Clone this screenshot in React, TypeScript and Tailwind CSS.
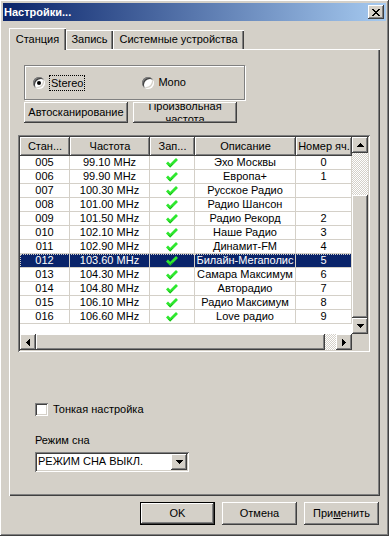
import React from "react";

// classic 3D border helpers
const raised =
  "bg-[#d4d0c8] shadow-[inset_-1px_-1px_0_#404040,inset_1px_1px_0_#ffffff,inset_-2px_-2px_0_#808080,inset_2px_2px_0_#d4d0c8]";
const sunken =
  "shadow-[inset_1px_1px_0_#808080,inset_-1px_-1px_0_#ffffff,inset_2px_2px_0_#404040,inset_-2px_-2px_0_#d4d0c8]";
const checker =
  "[background:repeating-conic-gradient(#ffffff_0_25%,#d4d0c8_0_50%)_0_0/2px_2px]";

interface Station {
  num: string;
  freq: string;
  name: string;
  cell: string;
}

const stations: Station[] = [
  { num: "005", freq: "99.10 MHz", name: "Эхо Москвы", cell: "0" },
  { num: "006", freq: "99.90 MHz", name: "Европа+", cell: "1" },
  { num: "007", freq: "100.30 MHz", name: "Русское Радио", cell: "" },
  { num: "008", freq: "101.00 MHz", name: "Радио Шансон", cell: "" },
  { num: "009", freq: "101.50 MHz", name: "Радио Рекорд", cell: "2" },
  { num: "010", freq: "102.10 MHz", name: "Наше Радио", cell: "3" },
  { num: "011", freq: "102.90 MHz", name: "Динамит-FM", cell: "4" },
  { num: "012", freq: "103.60 MHz", name: "Билайн-Мегаполис", cell: "5" },
  { num: "013", freq: "104.30 MHz", name: "Самара Максимум", cell: "6" },
  { num: "014", freq: "104.80 MHz", name: "Авторадио", cell: "7" },
  { num: "015", freq: "106.10 MHz", name: "Радио Максимум", cell: "8" },
  { num: "016", freq: "106.60 MHz", name: "Love радио", cell: "9" },
];

// little black triangle used on scroll buttons and the combo box
const Arrow = ({ dir }: { dir: "up" | "down" | "left" | "right" }) => {
  const pts = {
    up: "3.5,0 7,4 0,4",
    down: "0,0 7,0 3.5,4",
    left: "4,0 4,7 0,3.5",
    right: "0,0 4,3.5 0,7",
  }[dir];
  const vertical = dir === "up" || dir === "down";
  return (
    <svg width={vertical ? 7 : 4} height={vertical ? 4 : 7}>
      <polygon points={pts} fill="#000" shapeRendering="crispEdges" />
    </svg>
  );
};

const Check = () => (
  <svg width="12" height="10" viewBox="0 0 12 10">
    <path d="M1 4.5 L4.2 7.8 L11 1" stroke="#2ee82e" strokeWidth="2.8" fill="none" />
    <path d="M2.5 7 L4.2 8.8 L6.5 6.4" stroke="#14b014" strokeWidth="1" fill="none" />
  </svg>
);

const ScrollBtn = ({ dir }: { dir: "up" | "down" | "left" | "right" }) => (
  <div className={`w-[16px] h-[16px] shrink-0 flex items-center justify-center ${raised}`}>
    <Arrow dir={dir} />
  </div>
);

const cols = ["w-[50px]", "w-[80px]", "w-[45px]", "w-[101px]", "w-[56px]"];

const App = () => {
  return (
    <div
      className={`w-[389px] h-[536px] p-[3px] flex flex-col text-[11px] text-black font-['Liberation_Sans',Arial,sans-serif] ${raised}`}
    >
      {/* TITLE BAR */}
      <div className="h-[18px] flex items-center justify-between bg-[linear-gradient(to_right,#0a246a,#a6caf0)] pl-[1px] pr-[2px]">
        <span className="text-white font-bold text-[11px]">Настройки...</span>
        <div className={`w-[16px] h-[14px] flex items-center justify-center ${raised}`}>
          <svg width="8" height="7" viewBox="0 0 8 7">
            <path d="M0 0 L7 7 M1 0 L8 7 M7 0 L0 7 M8 0 L1 7" stroke="#000" strokeWidth="1" />
          </svg>
        </div>
      </div>

      <div className="px-[6px] pt-[7px] flex flex-col">
        {/* TABS */}
        <div className="flex items-end h-[21px]">
          <div className="relative z-10 h-[22px] mb-[-1px] w-[57px] flex items-center justify-center bg-[#d4d0c8] shadow-[inset_1px_1px_0_#ffffff,inset_-1px_0_0_#404040,inset_-2px_0_0_#808080]">
            Станция
          </div>
          <div className="h-[19px] w-[47px] flex items-center justify-center shadow-[inset_1px_1px_0_#ffffff,inset_-1px_0_0_#404040,inset_-2px_0_0_#808080]">
            Запись
          </div>
          <div className="h-[19px] w-[131px] flex items-center justify-center shadow-[inset_1px_1px_0_#ffffff,inset_-1px_0_0_#404040,inset_-2px_0_0_#808080]">
            Системные устройства
          </div>
        </div>

        {/* TAB PANEL */}
        <div className="w-[371px] h-[447px] flex flex-col shadow-[inset_1px_1px_0_#ffffff,inset_-1px_-1px_0_#404040,inset_-2px_-2px_0_#808080]">
          {/* stereo / mono group */}
          <div className="ml-[15px] mt-[16px] w-[221px] h-[35px] flex items-center pl-[8px] border border-[#808080] shadow-[1px_1px_0_#ffffff,inset_1px_1px_0_#ffffff]">
            <div className="flex items-center gap-[4px]">
              <div className="w-[12px] h-[12px] rounded-full bg-white flex items-center justify-center shadow-[inset_1px_1px_0_#808080,inset_-1px_-1px_0_#ffffff,inset_2px_2px_0_#404040,inset_-2px_-2px_0_#d4d0c8]">
                <div className="w-[4px] h-[4px] rounded-full bg-black" />
              </div>
              <span className="px-[1px] leading-[14px] border border-dotted border-black">Stereo</span>
            </div>
            <div className="flex items-center gap-[4px] ml-[57px]">
              <div className="w-[12px] h-[12px] rounded-full bg-white shadow-[inset_1px_1px_0_#808080,inset_-1px_-1px_0_#ffffff,inset_2px_2px_0_#404040,inset_-2px_-2px_0_#d4d0c8]" />
              <span>Mono</span>
            </div>
          </div>

          {/* scan buttons */}
          <div className="ml-[15px] mt-[2px] flex gap-[5px]">
            <div className={`w-[104px] h-[21px] flex items-center justify-center ${raised}`}>
              Автосканирование
            </div>
            <div className={`w-[104px] h-[21px] p-[2px] ${raised}`}>
              <div className="h-full overflow-hidden flex flex-col items-center justify-center leading-[13px]">
                <span>Произвольная</span>
                <span>частота</span>
              </div>
            </div>
          </div>

          {/* station list */}
          <div className={`ml-[9px] mt-[12px] w-[352px] h-[217px] p-[2px] bg-white flex flex-col ${sunken}`}>
            <div className="flex flex-1 min-h-0">
              <div className="flex-1 flex flex-col overflow-hidden">
                <div className="flex h-[19px] shrink-0">
                  {["Стан...", "Частота", "Зап...", "Описание", "Номер яч."].map((h, i) => (
                    <div key={h} className={`${cols[i]} h-full flex items-center justify-center ${raised}`}>
                      {h}
                    </div>
                  ))}
                </div>
                {stations.map((s) => {
                  const sel = s.num === "012";
                  return (
                    <div
                      key={s.num}
                      className={`flex h-[14px] shrink-0 border-b border-[#d4d0c8] leading-[13px] ${
                        sel ? "bg-[#0a246a] text-white outline-1 outline-dotted outline-[#d4d0c8] -outline-offset-1" : ""
                      }`}
                    >
                      <div className={`${cols[0]} text-center border-r border-[#d4d0c8]`}>{s.num}</div>
                      <div className={`${cols[1]} text-center border-r border-[#d4d0c8]`}>{s.freq}</div>
                      <div className={`${cols[2]} flex items-center justify-center border-r border-[#d4d0c8]`}>
                        <Check />
                      </div>
                      <div className={`${cols[3]} text-center whitespace-nowrap border-r border-[#d4d0c8]`}>{s.name}</div>
                      <div className={`${cols[4]} text-center border-r border-[#d4d0c8]`}>{s.cell}</div>
                    </div>
                  );
                })}
              </div>
              {/* vertical scrollbar */}
              <div className="w-[16px] flex flex-col">
                <ScrollBtn dir="up" />
                <div className={`h-[42px] ${checker}`} />
                <div className={`flex-1 ${raised}`} />
                <ScrollBtn dir="down" />
              </div>
            </div>
            {/* horizontal scrollbar */}
            <div className="flex h-[16px] shrink-0">
              <ScrollBtn dir="left" />
              <div className={`w-[289px] ${raised}`} />
              <div className={`flex-1 ${checker}`} />
              <ScrollBtn dir="right" />
              <div className="w-[16px] bg-[#d4d0c8]" />
            </div>
          </div>

          {/* fine tuning */}
          <div className="ml-[26px] mt-[49px] flex items-center gap-[5px]">
            <div className={`w-[13px] h-[13px] bg-white ${sunken}`} />
            <span>Тонкая настройка</span>
          </div>

          <div className="ml-[26px] mt-[15px] leading-[14px]">Режим сна</div>

          <div className={`ml-[26px] mt-[5px] w-[154px] h-[20px] p-[2px] bg-white flex ${sunken}`}>
            <div className="flex-1 flex items-center pl-[1px] whitespace-nowrap">РЕЖИМ СНА ВЫКЛ.</div>
            <div className={`w-[16px] h-[16px] flex items-center justify-center ${raised}`}>
              <Arrow dir="down" />
            </div>
          </div>
        </div>

        {/* DIALOG BUTTONS */}
        <div className="mt-[6px] flex justify-end gap-[7px] pr-[1px]">
          <div className="w-[75px] h-[23px] border border-black">
            <div className={`w-full h-full flex items-center justify-center ${raised}`}>OK</div>
          </div>
          <div className={`w-[75px] h-[23px] flex items-center justify-center ${raised}`}>Отмена</div>
          <div className={`w-[75px] h-[23px] flex items-center justify-center ${raised}`}>
            <span>
              При<span className="underline">м</span>енить
            </span>
          </div>
        </div>
      </div>
    </div>
  );
};

export default App;
